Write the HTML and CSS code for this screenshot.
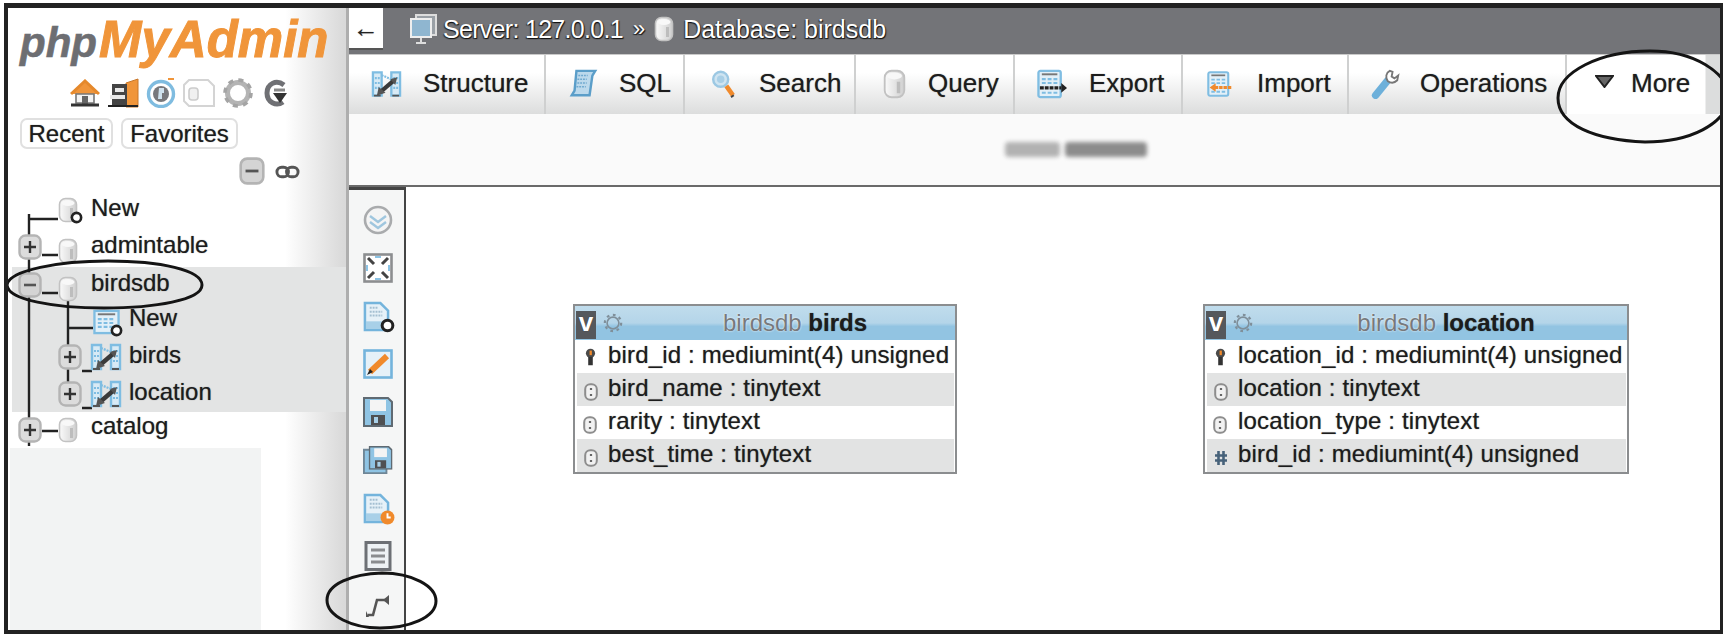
FILE: index.html
```html
<!DOCTYPE html>
<html lang="en">
<head>
    <meta charset="UTF-8">
    <title>phpMyAdmin - birdsdb designer</title>
    <link rel="stylesheet" href="styles.css">
</head>
<body>
    <!-- Shared icons -->
    <svg class="sprite" aria-hidden="true">
        <defs>
            <linearGradient id="dbFill" x1="0" y1="0" x2="1" y2="0">
                <stop offset="0" stop-color="#fafafa"/>
                <stop offset="1" stop-color="#cfcfcf"/>
            </linearGradient>
        </defs>
        <symbol id="i-db" viewBox="0 0 20 26">
            <rect x="1.500" y="1.500" width="17" height="23" rx="6" fill="url(#dbFill)" stroke="#c2c2c2" stroke-width="1.600"/>
            <ellipse cx="10" cy="6" rx="6.500" ry="3" fill="#f8f8f8"/>
            <rect x="12" y="11" width="3" height="10" fill="#bdbdbd"/>
        </symbol>
        <symbol id="i-plus" viewBox="0 0 24 26">
            <rect x="1.500" y="1.500" width="21" height="23" rx="6" fill="#dcdcdc" stroke="#b4b4b4" stroke-width="2.400"/>
            <path d="M6 13h12M12 7v12" stroke="#333" stroke-width="2.400"/>
        </symbol>
        <symbol id="i-minus" viewBox="0 0 24 26">
            <rect x="1.500" y="1.500" width="21" height="23" rx="6" fill="#d4d4d4" stroke="#b4b4b4" stroke-width="2.400"/>
            <path d="M6 13h12" stroke="#555" stroke-width="2.600"/>
        </symbol>
        <symbol id="i-rel" viewBox="0 0 32 28">
            <path d="M2 2h9v24H2zM21 2h9v24h-9z" fill="#d8eaf5" stroke="#7fbde2" stroke-width="2.400"/>
            <path d="M11 5l10 4M4 8h5M4 13h5M4 18h5M23 8h5M23 13h5M23 18h5" stroke="#7fbde2" stroke-width="2.200" stroke-dasharray="2 1"/>
            <path d="M10 22 24 10" stroke="#3a3a3a" stroke-width="4.400"/>
            <path d="M6 26l2-9 7 6z" fill="#555"/>
            <path d="M27 7l-2 8-5-6z" fill="#555"/>
            <path d="M3 26h7M22 26h7" stroke="#555" stroke-width="2"/>
        </symbol>
        <symbol id="i-table" viewBox="0 0 28 26">
            <rect x="1.500" y="1.500" width="25" height="23" fill="#e3f0f8" stroke="#7fbde2" stroke-width="2.400"/>
            <path d="M5 5h18" stroke="#777" stroke-width="2"/>
            <path d="M5 10h18M5 14h18M5 18h18" stroke="#7fbde2" stroke-width="2.200" stroke-dasharray="4 2"/>
        </symbol>
        <symbol id="i-ring" viewBox="0 0 14 14">
            <circle cx="7" cy="7" r="5" fill="#fff" stroke="#222" stroke-width="2.800"/>
        </symbol>
        <symbol id="i-sql" viewBox="0 0 30 32">
            <path d="M8 2h20l-3 5-3 21H3l3-5z" fill="#bcd9ec" stroke="#5b9ec9" stroke-width="2.600"/>
            <path d="M10 7h10M9 11h10M9 15h10M8 19h10" stroke="#6fa9cf" stroke-width="1.600" stroke-dasharray="2 1"/>
        </symbol>
        <symbol id="i-search" viewBox="0 0 26 32">
            <circle cx="10" cy="11" r="8" fill="#cfe4f1" stroke="#9cc8e3" stroke-width="2.600"/>
            <circle cx="10" cy="11" r="4" fill="#a9cfe6"/>
            <path d="M16 18l7 10" stroke="#f08a2c" stroke-width="5"/>
            <path d="M21 30l3-2" stroke="#444" stroke-width="2"/>
        </symbol>
        <symbol id="i-export" viewBox="0 0 32 30">
            <rect x="1.500" y="1.500" width="23" height="27" rx="2" fill="#e3f0f8" stroke="#7fbde2" stroke-width="2.400"/>
            <path d="M5 5h16" stroke="#777" stroke-width="2"/>
            <path d="M5 10h16M5 14h16M5 24h16" stroke="#7fbde2" stroke-width="2.200" stroke-dasharray="4 2"/>
            <path d="M3 19h22" stroke="#222" stroke-width="3.400" stroke-dasharray="4 1"/>
            <path d="M25 14l6 5-6 5z" fill="#222"/>
        </symbol>
        <symbol id="i-import" viewBox="0 0 30 30">
            <rect x="1.500" y="1.500" width="23" height="27" rx="2" fill="#e3f0f8" stroke="#7fbde2" stroke-width="2.400"/>
            <path d="M5 5h16" stroke="#777" stroke-width="2"/>
            <path d="M5 10h16M5 14h16M5 24h16" stroke="#7fbde2" stroke-width="2.200" stroke-dasharray="4 2"/>
            <path d="M9 19h20" stroke="#f08a2c" stroke-width="3.400" stroke-dasharray="4 1"/>
            <path d="M10 14l-7 5 7 5z" fill="#f08a2c"/>
        </symbol>
        <symbol id="i-wrench" viewBox="0 0 30 32">
            <path d="M4 28 17 12" stroke="#6db0da" stroke-width="8" stroke-linecap="round"/>
            <path d="M19 2c-4 2-5 7-2 11 3 2 7 2 10-1l1-5-4 3-3-2 1-5z" fill="#fff" stroke="#777" stroke-width="2"/>
        </symbol>
        <symbol id="i-home" viewBox="0 0 30 28">
            <path d="M1 15 15 2l14 13" fill="#f0953a" stroke="#e5892c" stroke-width="3"/>
            <path d="M6 15h18v9H6z" fill="#f4f4f4" stroke="#777" stroke-width="1.600"/>
            <path d="M12 17h6v8h-6z" fill="#666"/>
            <path d="M1 26h28" stroke="#333" stroke-width="3"/>
        </symbol>
        <symbol id="i-exit" viewBox="0 0 32 30">
            <path d="M19 5 31 1v28H19z" fill="#f0953a" stroke="#c8772a" stroke-width="1"/>
            <path d="M5 6h15v22H5z" fill="#444"/>
            <path d="M8 10h9v4H8zM3 17h15v4H3z" fill="#e8e8e8"/>
            <path d="M1 28h30" stroke="#222" stroke-width="2"/>
        </symbol>
        <symbol id="i-help" viewBox="0 0 30 30">
            <circle cx="15" cy="16" r="12.500" fill="#fff" stroke="#7fbce0" stroke-width="3.400"/>
            <circle cx="15" cy="16" r="8" fill="#77787c"/>
            <path d="M13 10h5v5h-2v6h-4z" fill="#cfe2ee"/>
            <path d="M22 1h6" stroke="#f0953a" stroke-width="2"/>
        </symbol>
        <symbol id="i-doc" viewBox="0 0 32 30">
            <path d="M6 2h19l6 6v20H6l-5-5V7z" fill="#fff" stroke="#d4d4d4" stroke-width="2"/>
            <rect x="6" y="10" width="9" height="12" rx="3" fill="#f0f0f0" stroke="#ccc" stroke-width="1.600"/>
        </symbol>
        <symbol id="i-gear" viewBox="0 0 32 30">
            <circle cx="16" cy="15" r="10.500" fill="none" stroke="#b4b4b4" stroke-width="5"/>
            <circle cx="16" cy="15" r="13" fill="none" stroke="#a4a4a4" stroke-width="3.600" stroke-dasharray="5 5.200"/>
        </symbol>
        <symbol id="i-gear-line" viewBox="0 0 22 22">
            <circle cx="11" cy="11" r="6.500" fill="none" stroke="#7f8f9a" stroke-width="1.800"/>
            <circle cx="11" cy="11" r="9" fill="none" stroke="#7f8f9a" stroke-width="2.400" stroke-dasharray="3 4"/>
        </symbol>
        <symbol id="i-reload" viewBox="0 0 24 30">
            <path d="M20 7C12 1 3 6 3 15s9 14 16 9" fill="none" stroke="#6f7074" stroke-width="5"/>
            <path d="M9 15h14l-7 10z" fill="#333"/>
            <path d="M10 12h11" stroke="#888" stroke-width="3"/>
        </symbol>
        <symbol id="i-link" viewBox="0 0 26 16">
            <rect x="2" y="3" width="12" height="10" rx="5" fill="none" stroke="#555" stroke-width="3"/>
            <rect x="12" y="3" width="12" height="10" rx="5" fill="none" stroke="#555" stroke-width="3"/>
        </symbol>
        <symbol id="i-page" viewBox="0 0 28 32">
            <path d="M2 2h16l8 8v20H2z" fill="#e6f1f8" stroke="#74b4dc" stroke-width="2.600"/>
            <path d="M3 21h22v8H3z" fill="#a8d0e8"/>
            <path d="M7 7h9M7 11h13M7 15h13" stroke="#a4bfd1" stroke-width="2" stroke-dasharray="2 1"/>
        </symbol>
        <symbol id="i-floppy" viewBox="0 0 30 30">
            <path d="M1 1h24l4 4v24H1z" fill="#8fc4e4" stroke="#5f6a72" stroke-width="2"/>
            <rect x="7" y="3" width="16" height="11" fill="#f4f4f4"/>
            <path d="M8 18h14v10H8z" fill="#4f5052"/>
            <rect x="11" y="20" width="4" height="6" fill="#a8d0e8"/>
        </symbol>
        <symbol id="i-col-key" viewBox="0 0 12 20">
            <circle cx="6" cy="6" r="5" fill="#4a4a4a"/>
            <path d="M5 3h2.500v5H5z" fill="#f08a2c"/>
            <path d="M3.500 10h5v9h-5z" fill="#333"/>
        </symbol>
        <symbol id="i-col-text" viewBox="0 0 14 18">
            <rect x="1.200" y="1.200" width="11.600" height="15.600" rx="5" fill="#f1f1f1" stroke="#8d8d8d" stroke-width="2"/>
            <path d="M7 5v2M7 11v2" stroke="#666" stroke-width="2.200"/>
        </symbol>
        <symbol id="i-col-num" viewBox="0 0 14 18">
            <path d="M4.500 2v14M9.500 2v14M1 6.500h12M1 11.500h12" stroke="#47627a" stroke-width="2.600"/>
        </symbol>
    </svg>

    <div class="frame">
        <aside class="sidebar">
            <div class="logo"><span class="logo-php">php</span><span class="logo-my">MyAdmin</span></div>
            <div class="nav-icons">
                <svg class="ico-home"><use href="#i-home"/></svg>
                <svg class="ico-exit"><use href="#i-exit"/></svg>
                <svg class="ico-help"><use href="#i-help"/></svg>
                <svg class="ico-doc"><use href="#i-doc"/></svg>
                <svg class="ico-gear"><use href="#i-gear"/></svg>
                <svg class="ico-reload"><use href="#i-reload"/></svg>
            </div>
            <div class="recent-row">
                <button class="side-btn recent">Recent</button>
                <button class="side-btn favorites">Favorites</button>
            </div>
            <div class="collapse-row">
                <svg class="ico-collapse"><use href="#i-minus"/></svg>
                <svg class="ico-link"><use href="#i-link"/></svg>
            </div>

            <div class="tree">
                <svg class="tree-lines" width="210" height="270" viewBox="0 0 210 270">
                    <path d="M21 23V255M21 28H50M34 64H50M34 102H50M60 108V192M60 137H85M74 180H84M74 217H84M34 240H50" fill="none" stroke="#222" stroke-width="2.400"/>
                </svg>
                <div class="row row-top row-new">
                    <span class="toggle"></span>
                    <span class="db-wrap">
                        <svg class="ico-db"><use href="#i-db"/></svg>
                        <svg class="ico-ring"><use href="#i-ring"/></svg>
                    </span>
                    <span class="row-label">New</span>
                </div>
                <div class="row row-top">
                    <svg class="toggle"><use href="#i-plus"/></svg>
                    <span class="db-wrap"><svg class="ico-db"><use href="#i-db"/></svg></span>
                    <span class="row-label">admintable</span>
                </div>
                <div class="tree-open">
                    <div class="row row-top row-birdsdb">
                        <svg class="toggle"><use href="#i-minus"/></svg>
                        <span class="db-wrap"><svg class="ico-db"><use href="#i-db"/></svg></span>
                        <span class="row-label">birdsdb</span>
                    </div>
                    <div class="row row-sub row-subnew">
                        <span class="toggle"></span>
                        <span class="tbl-wrap">
                            <svg class="ico-tbl"><use href="#i-table"/></svg>
                            <svg class="ico-ring ring-tbl"><use href="#i-ring"/></svg>
                        </span>
                        <span class="row-label">New</span>
                    </div>
                    <div class="row row-sub">
                        <svg class="toggle"><use href="#i-plus"/></svg>
                        <span class="tbl-wrap"><svg class="ico-rel"><use href="#i-rel"/></svg></span>
                        <span class="row-label">birds</span>
                    </div>
                    <div class="row row-sub">
                        <svg class="toggle"><use href="#i-plus"/></svg>
                        <span class="tbl-wrap"><svg class="ico-rel"><use href="#i-rel"/></svg></span>
                        <span class="row-label">location</span>
                    </div>
                </div>
                <div class="row row-top row-catalog">
                    <svg class="toggle"><use href="#i-plus"/></svg>
                    <span class="db-wrap"><svg class="ico-db"><use href="#i-db"/></svg></span>
                    <span class="row-label">catalog</span>
                </div>
            </div>
            <div class="side-empty"></div>
        </aside>

        <main class="main">
            <header class="topbar">
                <div class="back-btn">&#8592;</div>
                <svg class="ico-server" viewBox="0 0 28 30">
                    <rect x="6" y="1" width="20" height="20" fill="#9aa0a6" stroke="#ddd" stroke-width="2"/>
                    <rect x="1" y="5" width="20" height="18" fill="#8fb6d0" stroke="#eee" stroke-width="2"/>
                    <path d="M11 24v5M6 29h10" stroke="#ddd" stroke-width="2"/>
                </svg>
                <span class="crumb crumb-server">Server: 127.0.0.1</span>
                <span class="crumb crumb-sep">&raquo;</span>
                <svg class="ico-crumb-db"><use href="#i-db"/></svg>
                <span class="crumb">Database: birdsdb</span>
            </header>

            <nav class="tabs">
                <a class="tab">
                    <svg class="tab-ico w31"><use href="#i-rel"/></svg>
                    <span>Structure</span>
                </a>
                <a class="tab">
                    <svg class="tab-ico w30"><use href="#i-sql"/></svg>
                    <span>SQL</span>
                </a>
                <a class="tab tab-search">
                    <svg class="tab-ico w25"><use href="#i-search"/></svg>
                    <span>Search</span>
                </a>
                <a class="tab tab-query">
                    <svg class="tab-ico w25"><use href="#i-db"/></svg>
                    <span>Query</span>
                </a>
                <a class="tab">
                    <svg class="tab-ico w31"><use href="#i-export"/></svg>
                    <span>Export</span>
                </a>
                <a class="tab tab-import">
                    <svg class="tab-ico w26"><use href="#i-import"/></svg>
                    <span>Import</span>
                </a>
                <a class="tab tab-ops">
                    <svg class="tab-ico w30"><use href="#i-wrench"/></svg>
                    <span>Operations</span>
                </a>
                <a class="tab tab-more">
                    <svg class="tab-ico w19" viewBox="0 0 19 13"><path d="M1 1h17L9.500 12z" fill="#666" stroke="#222" stroke-width="2"/></svg>
                    <span>More</span>
                </a>
            </nav>

            <div class="strip">
                <span class="smudge smudge-a"></span>
                <span class="smudge smudge-b"></span>
            </div>

            <section class="designer">
                <div class="toolbar">
                    <svg class="tool" viewBox="0 0 30 30">
                        <circle cx="15" cy="15" r="13" fill="#f4f4f4" stroke="#a9abad" stroke-width="2.600"/>
                        <path d="M7 11l8 6 8-6M7 17l8 6 8-6" fill="none" stroke="#9fc6de" stroke-width="2.400"/>
                    </svg>
                    <svg class="tool" viewBox="0 0 30 30">
                        <rect x="1.500" y="1.500" width="27" height="27" fill="#fff" stroke="#8c8e90" stroke-width="2.600"/>
                        <path d="M5 5l6 6M25 5l-6 6M5 25l6-6M25 25l-6-6" stroke="#444" stroke-width="3"/>
                        <path d="M12 4h6M12 26h6M4 12v6M26 12v6" stroke="#8cc3e4" stroke-width="2"/>
                    </svg>
                    <span class="tool tool-stack">
                        <svg class="tool-page"><use href="#i-page"/></svg>
                        <svg class="tool-badge"><use href="#i-ring"/></svg>
                    </span>
                    <svg class="tool" viewBox="0 0 30 30">
                        <rect x="1.500" y="1.500" width="27" height="27" fill="#e6f1f8" stroke="#74b4dc" stroke-width="2.600"/>
                        <path d="M7 23 24 7" stroke="#f08a2c" stroke-width="6"/>
                        <path d="M4 26l3-6 3 3z" fill="#222"/>
                    </svg>
                    <svg class="tool"><use href="#i-floppy"/></svg>
                    <svg class="tool" viewBox="0 0 32 30">
                        <path d="M1 4h24v25H1z" fill="#8fc4e4" stroke="#6f8696" stroke-width="2"/>
                        <g transform="translate(6 0) scale(.85)"><use href="#i-floppy" width="30" height="30"/></g>
                    </svg>
                    <span class="tool tool-stack">
                        <svg class="tool-page"><use href="#i-page"/></svg>
                        <svg class="tool-badge" viewBox="0 0 14 14"><circle cx="7" cy="7" r="6.500" fill="#f08a2c"/><path d="M7 3v4h3" stroke="#fff" stroke-width="1.800" fill="none"/></svg>
                    </span>
                    <svg class="tool" viewBox="0 0 30 30">
                        <rect x="3" y="1.500" width="24" height="27" fill="#eef2f5" stroke="#6d7075" stroke-width="3"/>
                        <path d="M8 9h14M8 15h14M8 21h14" stroke="#8a8c8f" stroke-width="3"/>
                    </svg>
                    <svg class="tool tool-rel" viewBox="0 0 26 26">
                        <path d="M3 23h5l4-15h8" fill="none" stroke="#555" stroke-width="2.600"/>
                        <path d="M24 3v10l-6-5z" fill="#555"/>
                        <path d="M1 19v6h3z" fill="#555"/>
                    </svg>
                </div>

                <div class="canvas">
                    <div class="dtable dtable-birds">
                        <div class="dtable-head">
                            <span class="dtable-v">v</span>
                            <svg class="dtable-gear"><use href="#i-gear-line"/></svg>
                            <span class="dtable-title"><span class="db-name">birdsdb</span> <b>birds</b></span>
                        </div>
                        <div class="col"><svg class="col-ico col-key"><use href="#i-col-key"/></svg>bird_id : mediumint(4) unsigned</div>
                        <div class="col alt"><svg class="col-ico"><use href="#i-col-text"/></svg>bird_name : tinytext</div>
                        <div class="col"><svg class="col-ico"><use href="#i-col-text"/></svg>rarity : tinytext</div>
                        <div class="col alt"><svg class="col-ico"><use href="#i-col-text"/></svg>best_time : tinytext</div>
                    </div>
                    <div class="dtable dtable-location">
                        <div class="dtable-head">
                            <span class="dtable-v">v</span>
                            <svg class="dtable-gear"><use href="#i-gear-line"/></svg>
                            <span class="dtable-title"><span class="db-name">birdsdb</span> <b>location</b></span>
                        </div>
                        <div class="col"><svg class="col-ico col-key"><use href="#i-col-key"/></svg>location_id : mediumint(4) unsigned</div>
                        <div class="col alt"><svg class="col-ico"><use href="#i-col-text"/></svg>location : tinytext</div>
                        <div class="col"><svg class="col-ico"><use href="#i-col-text"/></svg>location_type : tinytext</div>
                        <div class="col alt"><svg class="col-ico"><use href="#i-col-num"/></svg>bird_id : mediumint(4) unsigned</div>
                    </div>
                </div>
            </section>
        </main>

        <!-- Hand drawn circles over the screenshot -->
        <svg class="marks" width="1712" height="622" viewBox="8 8 1712 622">
            <g fill="none" stroke="#141414" stroke-width="3">
                <path d="M7 285C9 270 60 261 108 261C160 261 202 270 202 285C202 300 155 308 104 308C55 308 8 300 7 285Z"/>
                <path d="M1558 98C1558 72 1600 51 1650 51C1695 51 1725 72 1731 96C1725 125 1690 142 1645 142C1595 140 1558 125 1558 98Z"/>
                <path d="M327 600C327 584 352 574 382 573C412 573 436 586 436 601C436 618 408 628 380 628C352 628 327 616 327 600Z"/>
            </g>
        </svg>
    </div>
</body>
</html>
```

FILE: styles.css
```css
* {
    box-sizing: border-box;
}

body {
    margin: 0;
    background: #fff;
    font-family: "Liberation Sans", Arial, sans-serif;
    color: #1c1c1c;
    overflow: hidden;
    text-shadow: 0 0 1px rgba(0, 0, 0, 0.55);
}

svg {
    display: block;
}

.sprite {
    position: absolute;
    width: 0;
    height: 0;
}

.frame {
    position: relative;
    display: flex;
    width: 1719px;
    height: 631px;
    margin: 3px 0 0 4px;
    border: solid #222;
    border-width: 5px 3px 4px 4px;
    overflow: hidden;
    background: #fff;
}

.marks {
    position: absolute;
    left: 0;
    top: 0;
    z-index: 5;
    pointer-events: none;
}

/* Sidebar */
.sidebar {
    display: flex;
    flex-direction: column;
    flex: 0 0 341px;
    border-right: 3px solid #aeaeae;
    background: linear-gradient(90deg, #fff 0, #fff 277px, #d9d9d9 336px);
}

.logo {
    height: 60px;
    padding: 8px 0 0 12px;
    font-style: italic;
    font-weight: bold;
    white-space: nowrap;
    line-height: 48px;
    text-shadow: none;
}

.logo-php {
    font-size: 42px;
    color: #6d6e72;
    -webkit-text-stroke: 0.6px #6d6e72;
}

.logo-my {
    font-size: 51px;
    color: #f0953a;
    margin-left: 2px;
    -webkit-text-stroke: 1px #f0953a;
}

.nav-icons {
    display: flex;
    align-items: center;
    gap: 7px;
    height: 30px;
    margin-top: 10px;
    padding-left: 62px;
}

.ico-home { width: 30px; height: 28px; }
.ico-exit { width: 32px; height: 30px; }
.ico-help { width: 30px; height: 30px; }
.ico-doc { width: 32px; height: 30px; }
.ico-gear { width: 32px; height: 30px; }
.ico-reload { width: 24px; height: 30px; margin-left: 3px; }

.recent-row {
    display: flex;
    gap: 8px;
    margin-top: 10px;
    padding-left: 12px;
}

.side-btn {
    height: 31px;
    padding: 0;
    border: 2px solid #e0e0e0;
    border-radius: 7px;
    background: #fff;
    font: 24px/26px "Liberation Sans", Arial, sans-serif;
    color: #1c1c1c;
    text-shadow: inherit;
}

.recent { width: 93px; }
.favorites { width: 117px; }

.collapse-row {
    display: flex;
    align-items: center;
    gap: 8px;
    height: 28px;
    margin-top: 8px;
    padding-left: 229px;
}

.ico-collapse { width: 30px; height: 28px; }
.ico-link { width: 25px; height: 16px; margin-top: 2px; }

/* Navigation tree */
.tree {
    position: relative;
    margin-top: 6px;
}

.tree-lines {
    position: absolute;
    left: 0;
    top: 0;
    z-index: 1;
}

.tree-open {
    margin: 2px 0 0 4px;
    background: #e3e4e4;
}

.row {
    display: flex;
    align-items: center;
    height: 37px;
    font-size: 24px;
}

.row-label {
    position: relative;
    left: -1px;
    margin-bottom: 4px;
}

.row-top { padding-left: 10px; }
.row-sub { padding-left: 46px; }
.tree-open .row-top { padding-left: 6px; height: 35px; }
.row-subnew { height: 36px; }

.toggle {
    position: relative;
    z-index: 2;
    flex: 0 0 24px;
    height: 26px;
}

.db-wrap {
    position: relative;
    z-index: 2;
    flex: 0 0 20px;
    height: 26px;
    margin: 8px 14px 0 16px;
}

.row-new .db-wrap { margin-top: 0; }
.row-catalog .db-wrap { margin-top: 4px; }
.row-catalog .toggle { margin-top: 4px; }
.row-catalog { height: 36px; padding-bottom: 4px; }

.ico-db {
    width: 20px;
    height: 26px;
}

.ico-ring {
    position: absolute;
    right: -5px;
    bottom: -1px;
    width: 13px;
    height: 13px;
}

.tbl-wrap {
    position: relative;
    z-index: 2;
    flex: 0 0 32px;
    height: 28px;
    margin: 0 8px;
}

.ico-tbl {
    width: 27px;
    height: 26px;
    margin: 3px 0 0 3px;
}

.ring-tbl {
    right: -1px;
    bottom: -3px;
}

.ico-rel {
    width: 32px;
    height: 28px;
}

.side-empty {
    flex: 1;
    width: 251px;
    margin-left: 2px;
    background: #f2f3f3;
}

/* Main column */
.main {
    display: flex;
    flex-direction: column;
    flex: 1;
    min-width: 0;
}

.topbar {
    display: flex;
    align-items: center;
    flex: 0 0 44px;
    padding-bottom: 4px;
    background: #737478;
}

.back-btn {
    align-self: flex-start;
    width: 34px;
    height: 42px;
    background: #fff;
    border-bottom: 2px solid #555;
    font-size: 26px;
    line-height: 40px;
    text-align: center;
    color: #222;
    margin-right: 27px;
}

.ico-server {
    width: 28px;
    height: 30px;
    margin-right: 5px;
}

.crumb {
    font-size: 25px;
    color: #fff;
    text-shadow: 1px 1px 1px #111, -1px 1px 1px #333;
    white-space: nowrap;
}

.crumb-server {
    letter-spacing: -0.7px;
}

.crumb-sep {
    margin: 0 9px 0 10px;
    font-size: 22px;
}

.ico-crumb-db {
    width: 20px;
    height: 26px;
    margin-right: 9px;
}

.tabs {
    display: grid;
    grid-template-columns: 197px 139px 171px 159px 168px 166px 218px 1fr;
    flex: 0 0 60px;
    background: linear-gradient(180deg, #fff 0, #fff 30%, #dcdddd 100%);
    border-top: 1px solid #c9c9c9;
}

.tab {
    display: flex;
    align-items: center;
    gap: 21px;
    height: 59px;
    padding: 0 0 2px 22px;
    border-right: 2px solid #cfd0d0;
    font-size: 26px;
    color: #1c1c1c;
    white-space: nowrap;
}

.tab-search { padding-left: 26px; gap: 23px; }
.tab-query { padding-left: 26px; }
.tab-import { padding-left: 24px; gap: 24px; }
.tab-ops { gap: 19px; }
.tab-more {
    padding-left: 28px;
    gap: 17px;
    border-right: 0;
    background: linear-gradient(90deg, #fff 0, #fff 138px, #dcdddd 139px);
}

.tab-ico { height: 30px; }
.w19 { width: 19px; height: 13px; margin-bottom: 4px; }
.w25 { width: 25px; }
.w26 { width: 26px; }
.w30 { width: 30px; }
.w31 { width: 31px; }

.strip {
    display: flex;
    align-items: center;
    gap: 5px;
    flex: 0 0 73px;
    padding: 0 0 0 656px;
    background: #fafafa;
    border-bottom: 2px solid #6a6a6a;
}

.smudge {
    display: block;
    height: 15px;
    background: #8c8c8c;
    border-radius: 4px;
    filter: blur(2px);
}

.smudge-a { width: 55px; background: #b2b2b2; }
.smudge-b { width: 82px; }

/* Designer */
.designer {
    display: flex;
    flex: 1;
    min-height: 0;
}

.toolbar {
    display: flex;
    flex-direction: column;
    align-items: center;
    gap: 18px;
    flex: 0 0 57px;
    padding: 15px 0 0 3px;
    border-top: 3px solid #444;
    border-right: 2px solid #444;
    background: #f5f6f6;
}

.tool {
    flex: 0 0 30px;
    width: 30px;
    height: 30px;
    position: relative;
}

.tool-rel {
    flex-basis: 26px;
    width: 26px;
    height: 26px;
    margin-top: 3px;
}

.tool-page {
    width: 27px;
    height: 31px;
}

.tool-badge {
    position: absolute;
    right: -2px;
    bottom: -2px;
    width: 15px;
    height: 15px;
}

.canvas {
    position: relative;
    flex: 1;
    background: #fff;
}

.dtable {
    position: absolute;
    top: 117px;
    height: 170px;
    border: 2px solid #8b8d8f;
    background: #fff;
}

.dtable-birds { left: 167px; width: 384px; }
.dtable-location { left: 797px; width: 426px; }

.dtable-head {
    display: flex;
    align-items: center;
    height: 34px;
    background: linear-gradient(180deg, #c0dcec 0, #b4d5e9 50%, #92c4e2 60%);
}

.dtable-v {
    flex: 0 0 20px;
    height: 28px;
    margin: 4px 0 0 1px;
    background: #55585c;
    color: #fff;
    font-size: 26px;
    font-weight: bold;
    line-height: 22px;
    text-align: center;
}

.dtable-gear {
    flex: 0 0 20px;
    height: 20px;
    margin-left: 7px;
}

.dtable-title {
    flex: 1;
    padding: 0 0 1px 12px;
    font-size: 24px;
    text-align: center;
    white-space: nowrap;
}

.db-name {
    color: #77797c;
    text-shadow: 0 0 2px #fff;
}

.col {
    display: flex;
    align-items: center;
    height: 33px;
    margin: 0 1px;
    padding: 0 0 3px 32px;
    font-size: 24px;
    letter-spacing: 0.16px;
    white-space: nowrap;
    position: relative;
}

.alt {
    margin-left: 2px;
    padding-left: 31px;
    background: #e2e3e3;
}

.col-ico {
    position: absolute;
    left: 7px;
    top: 10px;
    width: 14px;
    height: 18px;
}

.col-key {
    left: 9px;
    top: 7px;
    width: 11px;
    height: 20px;
}
```
